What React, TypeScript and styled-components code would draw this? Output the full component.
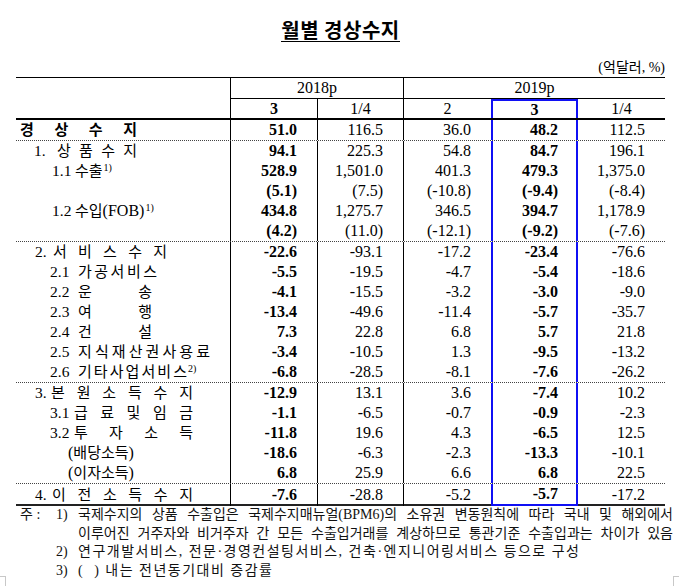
import React from 'react';
import styled, { createGlobalStyle, css } from 'styled-components';

const GlobalStyle = createGlobalStyle`
  html, body { margin: 0; padding: 0; background: #fff; }
  body {
    font-family: "Liberation Serif", "Noto Sans CJK KR", serif;
    color: #000;
  }
`;

const COLS = '215px 87px 86px 87px 87px 87px';
const BLUE = '#1010f4';

const Page = styled.div`
  position: relative;
  width: 679px;
  height: 586px;
  padding: 19px 0 0 16px;
  box-sizing: border-box;
  overflow: hidden;
`;

const TitleRow = styled.div`
  width: 649px;
  display: flex;
  justify-content: center;
`;

const Title = styled.h1`
  margin: 0;
  font-family: "Noto Sans CJK KR", sans-serif;
  font-size: 20px;
  font-weight: 700;
  line-height: 22px;
  letter-spacing: 0.5px;
  border-bottom: 1px solid #000;
`;

const Unit = styled.div`
  width: 649px;
  margin-top: 17px;
  text-align: right;
  font-size: 14px;
  line-height: 18px;
`;

const Table = styled.div`
  width: 649px;
  border-top: 1px solid #000;
  border-bottom: 2px solid #222;
  font-size: 16px;
`;

const Head = styled.div`
  display: grid;
  grid-template-columns: ${COLS};
  grid-template-rows: 21px 19px;
  border-bottom: 2px solid #000;
`;

const Corner = styled.div`
  grid-row: 1 / span 2;
  border-right: 1px solid #000;
`;

const YearCell = styled.div<{ $span: number; $divider?: boolean }>`
  grid-column: span ${(p) => p.$span};
  display: flex;
  align-items: center;
  justify-content: center;
  box-sizing: border-box;
  border-bottom: 1px solid #000;
  ${(p) => p.$divider && css`border-right: 1px solid #000;`}
`;

const PeriodCell = styled.div<{ $bold?: boolean; $divider?: boolean; $hl?: boolean }>`
  display: flex;
  align-items: center;
  justify-content: center;
  box-sizing: border-box;
  font-weight: ${(p) => (p.$bold ? 700 : 400)};
  ${(p) => p.$divider && css`border-right: 1px solid #000;`}
  ${(p) =>
    p.$hl &&
    css`
      border-top: 2px solid ${BLUE};
      border-left: 2px solid ${BLUE};
      border-right: 2px solid ${BLUE};
    `}
`;

const Row = styled.div<{ $dotted?: boolean }>`
  display: grid;
  grid-template-columns: ${COLS};
  height: 20px;
  ${(p) => p.$dotted && css`border-top: 1px dotted #444;`}
`;

const LabelCell = styled.div<{ $indent: number; $bold?: boolean }>`
  display: flex;
  align-items: center;
  padding-left: ${(p) => p.$indent}px;
  border-right: 1px solid #000;
  box-sizing: border-box;
  font-size: 15px;
  line-height: 20px;
  font-weight: ${(p) => (p.$bold ? 700 : 400)};
  white-space: nowrap;
`;

const Pre = styled.span<{ $w: number }>`
  width: ${(p) => p.$w}px;
  flex-shrink: 0;
  font-size: 15.5px;
`;

const Spread = styled.span<{ $w: number }>`
  display: inline-flex;
  justify-content: space-between;
  width: ${(p) => p.$w}px;
  flex-shrink: 0;
`;

const Sup = styled.span`
  align-self: flex-start;
  font-size: 10px;
  line-height: 12px;
  margin-top: 1px;
  margin-left: 1px;
`;

const Latin = styled.span`
  font-size: 16px;
`;

const NumCell = styled.div<{ $bold?: boolean; $divider?: boolean; $hl?: boolean; $hlEnd?: boolean }>`
  display: flex;
  align-items: center;
  justify-content: flex-end;
  padding-right: 20px;
  box-sizing: border-box;
  line-height: 20px;
  font-weight: ${(p) => (p.$bold ? 700 : 400)};
  ${(p) => p.$divider && css`border-right: 1px solid #000;`}
  ${(p) =>
    p.$hl &&
    css`
      border-left: 2px solid ${BLUE};
      border-right: 2px solid ${BLUE};
      padding-right: 18px;
    `}
  ${(p) => p.$hlEnd && css`border-bottom: 2px solid ${BLUE};`}
`;

const Notes = styled.div`
  margin-left: 4px;
  width: 653px;
  font-size: 14px;
  line-height: 18.5px;
  color: #111;
`;

const Note = styled.div`
  display: grid;
  grid-template-columns: 36px 22px 1fr;
`;

const NoteHead = styled.span`
  white-space: pre;
`;

const NoteNum = styled.span``;

const NoteText = styled.span<{ $justify?: boolean }>`
  ${(p) =>
    p.$justify
      ? css`
          text-align: justify;
          text-align-last: justify;
        `
      : css`
          letter-spacing: 1.5px;
        `}
`;

const CornerMark = styled.div<{ $side: 'left' | 'right' }>`
  position: absolute;
  top: 576px;
  width: 5px;
  height: 12px;
  border-top: 1px solid #c8c8c8;
  ${(p) =>
    p.$side === 'left'
      ? css`left: 0; border-right: 1px solid #c8c8c8;`
      : css`right: 0; border-left: 1px solid #c8c8c8;`}
`;

const chars = (s: string) => s.split('').map((c, i) => <span key={i}>{c}</span>);

type RowSpec = { label: React.ReactNode; vals: string[]; dotted?: boolean };

const rows: RowSpec[] = [
  {
    label: (
      <LabelCell $indent={4} $bold>
        <Spread $w={117}>{chars('경상수지')}</Spread>
      </LabelCell>
    ),
    vals: ['51.0', '116.5', '36.0', '48.2', '112.5'],
  },
  {
    dotted: true,
    label: (
      <LabelCell $indent={18}>
        <Pre $w={23}>1.</Pre>
        <Spread $w={80}>{chars('상품수지')}</Spread>
      </LabelCell>
    ),
    vals: ['94.1', '225.3', '54.8', '84.7', '196.1'],
  },
  {
    label: (
      <LabelCell $indent={36}>
        <Pre $w={23}>1.1</Pre>
        수출<Sup>1)</Sup>
      </LabelCell>
    ),
    vals: ['528.9', '1,501.0', '401.3', '479.3', '1,375.0'],
  },
  {
    label: <LabelCell $indent={36} />,
    vals: ['(5.1)', '(7.5)', '(-10.8)', '(-9.4)', '(-8.4)'],
  },
  {
    label: (
      <LabelCell $indent={36}>
        <Pre $w={23}>1.2</Pre>
        수입<Latin>(FOB)</Latin>
        <Sup>1)</Sup>
      </LabelCell>
    ),
    vals: ['434.8', '1,275.7', '346.5', '394.7', '1,178.9'],
  },
  {
    label: <LabelCell $indent={36} />,
    vals: ['(4.2)', '(11.0)', '(-12.1)', '(-9.2)', '(-7.6)'],
  },
  {
    dotted: true,
    label: (
      <LabelCell $indent={19}>
        <Pre $w={18}>2.</Pre>
        <Spread $w={114}>{chars('서비스수지')}</Spread>
      </LabelCell>
    ),
    vals: ['-22.6', '-93.1', '-17.2', '-23.4', '-76.6'],
  },
  {
    label: (
      <LabelCell $indent={34}>
        <Pre $w={28}>2.1</Pre>
        <Spread $w={79}>{chars('가공서비스')}</Spread>
      </LabelCell>
    ),
    vals: ['-5.5', '-19.5', '-4.7', '-5.4', '-18.6'],
  },
  {
    label: (
      <LabelCell $indent={34}>
        <Pre $w={28}>2.2</Pre>
        <Spread $w={74}>{chars('운송')}</Spread>
      </LabelCell>
    ),
    vals: ['-4.1', '-15.5', '-3.2', '-3.0', '-9.0'],
  },
  {
    label: (
      <LabelCell $indent={34}>
        <Pre $w={28}>2.3</Pre>
        <Spread $w={74}>{chars('여행')}</Spread>
      </LabelCell>
    ),
    vals: ['-13.4', '-49.6', '-11.4', '-5.7', '-35.7'],
  },
  {
    label: (
      <LabelCell $indent={34}>
        <Pre $w={28}>2.4</Pre>
        <Spread $w={74}>{chars('건설')}</Spread>
      </LabelCell>
    ),
    vals: ['7.3', '22.8', '6.8', '5.7', '21.8'],
  },
  {
    label: (
      <LabelCell $indent={34}>
        <Pre $w={28}>2.5</Pre>
        <Spread $w={132}>{chars('지식재산권사용료')}</Spread>
      </LabelCell>
    ),
    vals: ['-3.4', '-10.5', '1.3', '-9.5', '-13.2'],
  },
  {
    label: (
      <LabelCell $indent={34}>
        <Pre $w={28}>2.6</Pre>
        <Spread $w={109}>{chars('기타사업서비스')}</Spread>
        <Sup>2)</Sup>
      </LabelCell>
    ),
    vals: ['-6.8', '-28.5', '-8.1', '-7.6', '-26.2'],
  },
  {
    dotted: true,
    label: (
      <LabelCell $indent={19}>
        <Pre $w={16}>3.</Pre>
        <Spread $w={142}>{chars('본원소득수지')}</Spread>
      </LabelCell>
    ),
    vals: ['-12.9', '13.1', '3.6', '-7.4', '10.2'],
  },
  {
    label: (
      <LabelCell $indent={34}>
        <Pre $w={24}>3.1</Pre>
        <Spread $w={119}>{chars('급료및임금')}</Spread>
      </LabelCell>
    ),
    vals: ['-1.1', '-6.5', '-0.7', '-0.9', '-2.3'],
  },
  {
    label: (
      <LabelCell $indent={34}>
        <Pre $w={24}>3.2</Pre>
        <Spread $w={119}>{chars('투자소득')}</Spread>
      </LabelCell>
    ),
    vals: ['-11.8', '19.6', '4.3', '-6.5', '12.5'],
  },
  {
    label: (
      <LabelCell $indent={52}>
        <Latin>(</Latin>배당소득<Latin>)</Latin>
      </LabelCell>
    ),
    vals: ['-18.6', '-6.3', '-2.3', '-13.3', '-10.1'],
  },
  {
    label: (
      <LabelCell $indent={52}>
        <Latin>(</Latin>이자소득<Latin>)</Latin>
      </LabelCell>
    ),
    vals: ['6.8', '25.9', '6.6', '6.8', '22.5'],
  },
  {
    dotted: true,
    label: (
      <LabelCell $indent={19}>
        <Pre $w={17}>4.</Pre>
        <Spread $w={141}>{chars('이전소득수지')}</Spread>
      </LabelCell>
    ),
    vals: ['-7.6', '-28.8', '-5.2', '-5.7', '-17.2'],
  },
];

export default function App() {
  return (
    <>
      <GlobalStyle />
      <Page>
        <TitleRow>
          <Title>월별 경상수지</Title>
        </TitleRow>
        <Unit>(억달러, %)</Unit>
        <Table>
          <Head>
            <Corner />
            <YearCell $span={2} $divider>
              2018p
            </YearCell>
            <YearCell $span={3}>2019p</YearCell>
            <PeriodCell $bold $divider>
              3
            </PeriodCell>
            <PeriodCell $divider>1/4</PeriodCell>
            <PeriodCell>2</PeriodCell>
            <PeriodCell $bold $hl>
              3
            </PeriodCell>
            <PeriodCell>1/4</PeriodCell>
          </Head>
          {rows.map((r, i) => {
            const last = i === rows.length - 1;
            return (
              <Row key={i} $dotted={r.dotted}>
                {r.label}
                <NumCell $bold $divider>
                  {r.vals[0]}
                </NumCell>
                <NumCell $divider>{r.vals[1]}</NumCell>
                <NumCell>{r.vals[2]}</NumCell>
                <NumCell $bold $hl $hlEnd={last}>
                  {r.vals[3]}
                </NumCell>
                <NumCell>{r.vals[4]}</NumCell>
              </Row>
            );
          })}
        </Table>
        <Notes>
          <Note>
            <NoteHead>주 :</NoteHead>
            <NoteNum>1)</NoteNum>
            <NoteText $justify>
              국제수지의 상품 수출입은 국제수지매뉴얼(BPM6)의 소유권 변동원칙에 따라 국내 및 해외에서
              <br />
              이루어진 거주자와 비거주자 간 모든 수출입거래를 계상하므로 통관기준 수출입과는 차이가 있음
            </NoteText>
          </Note>
          <Note>
            <NoteHead />
            <NoteNum>2)</NoteNum>
            <NoteText>연구개발서비스, 전문·경영컨설팅서비스, 건축·엔지니어링서비스 등으로 구성</NoteText>
          </Note>
          <Note>
            <NoteHead />
            <NoteNum>3)</NoteNum>
            <NoteText>(&nbsp;&nbsp;) 내는 전년동기대비 증감률</NoteText>
          </Note>
        </Notes>
        <CornerMark $side="left" />
        <CornerMark $side="right" />
      </Page>
    </>
  );
}
